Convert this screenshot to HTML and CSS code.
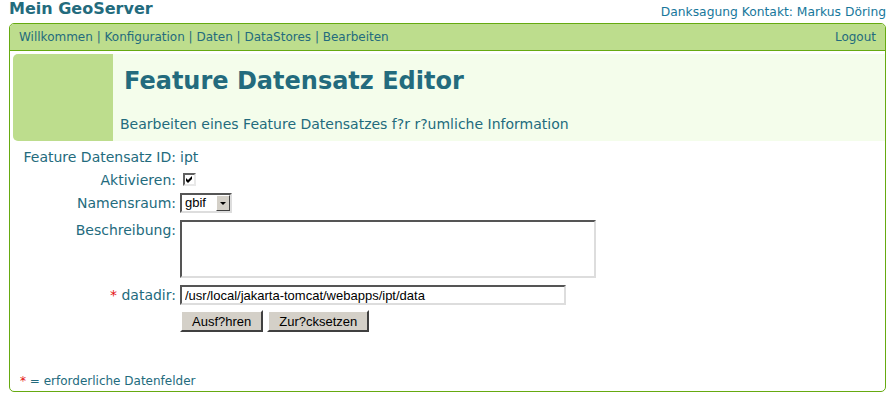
FILE: index.html
```html
<!DOCTYPE html>
<html>
<head>
    <meta charset="UTF-8">
    <title>Feature Datensatz Editor</title>
    <link rel="stylesheet" href="styles.css">
</head>
<body>
    <!-- Top line with title and credits -->
    <div class="top-line">
        <div class="site-title">Mein GeoServer</div>
        <div class="credits"><a href="#">Danksagung</a> <a href="#">Kontakt: Markus Döring</a></div>
    </div>
    <div class="frame">
        <div class="nav-bar">
            <div class="nav-links">
                <a href="#">Willkommen</a> | <a href="#">Konfiguration</a> | <a href="#">Daten</a> | <a href="#">DataStores</a> | <a href="#">Bearbeiten</a>
            </div>
            <a href="#" class="logout">Logout</a>
        </div>
        <div class="page-head">
            <div class="head-mark"></div>
            <div class="head-text">
                <h1>Feature Datensatz Editor</h1>
                <p>Bearbeiten eines Feature Datensatzes f?r r?umliche Information</p>
            </div>
        </div>
        <form class="edit-form">
            <div class="form-label">Feature Datensatz ID:</div>
            <div class="form-value">ipt</div>

            <div class="form-label">Aktivieren:</div>
            <div class="form-value">
                <span class="check">
                    <svg width="9" height="9" viewBox="0 0 9 9"><path d="M1 3 L3 5 L7 1 L7 4 L3 8 L1 6 Z" fill="#000"/></svg>
                </span>
            </div>

            <div class="form-label">Namensraum:</div>
            <div class="form-value">
                <div class="fake-select">
                    <span>gbif</span>
                    <span class="select-arrow"></span>
                </div>
            </div>

            <div class="form-label row-wide">Beschreibung:</div>
            <div class="form-value row-wide"><textarea class="text-area"></textarea></div>

            <div class="form-label row-wide"><span class="req">*</span> datadir:</div>
            <div class="form-value row-wide"><input type="text" class="text-field" value="/usr/local/jakarta-tomcat/webapps/ipt/data"></div>

            <div></div>
            <div class="form-value buttons">
                <button type="button" class="form-button">Ausf?hren</button>
                <button type="button" class="form-button">Zur?cksetzen</button>
            </div>
        </form>
        <div class="footnote"><span class="req">*</span> = erforderliche Datenfelder</div>
    </div>
</body>
</html>
```

FILE: styles.css
```css
body {
    margin: 0;
    padding: 0 3px 0 9px;
    font-family: "DejaVu Sans", Verdana, sans-serif;
    font-size: 12px;
    color: #236b7d;
    background-color: #fff;
}
a {
    color: inherit;
    text-decoration: none;
}
.top-line {
    display: flex;
    justify-content: space-between;
    align-items: flex-start;
    height: 23px;
}
.site-title {
    font-weight: bold;
    font-size: 16px;
    line-height: 20px;
    margin-top: -1px;
}
.credits {
    color: #17779b;
    font-size: 12.3px;
    line-height: 16px;
    margin-top: 4px;
}
.frame {
    border: 1px solid #66aa11;
    border-radius: 5px;
    box-sizing: border-box;
    height: 369px;
}
.nav-bar {
    display: flex;
    justify-content: space-between;
    align-items: center;
    height: 26px;
    padding: 0 9px;
    background-color: #bddd8d;
    border-bottom: 1px solid #66aa11;
    border-radius: 4px 4px 0 0;
    font-size: 12px;
}
.page-head {
    display: flex;
    margin: 3px 0 0 3px;
    height: 87px;
    background-color: #f4fdeb;
    border-radius: 5px 0 0 5px;
}
.head-mark {
    width: 100px;
    background-color: #bddd8d;
    border-radius: 5px 0 0 5px;
}
.head-text h1 {
    margin: 12px 0 0 11px;
    font-size: 24px;
    line-height: 30px;
}
.head-text p {
    margin: 19px 0 0 7px;
    font-size: 14px;
    line-height: 18px;
}
.edit-form {
    display: grid;
    grid-template-columns: 154px auto;
    column-gap: 4px;
    row-gap: 3px;
    margin: 6px 0 0 12px;
    align-items: start;
}
.form-label {
    text-align: right;
    font-size: 14px;
    line-height: 20px;
    white-space: nowrap;
}
.form-value {
    font-size: 14px;
    line-height: 20px;
}
.row-wide {
    margin-top: 4px;
}
.req {
    color: #e41010;
}
.check {
    display: inline-block;
    width: 13px;
    height: 13px;
    box-sizing: border-box;
    margin: 3px 0 0 3px;
    border: 2px solid;
    border-color: #606060 #e8e8e8 #e8e8e8 #606060;
    background-color: #fff;
    vertical-align: top;
}
.check svg {
    display: block;
}
.fake-select {
    display: flex;
    width: 52px;
    height: 20px;
    box-sizing: border-box;
    border: 2px solid;
    border-color: #555 #ddd #ddd #555;
    background-color: #fff;
    font-family: "Liberation Sans", Arial, sans-serif;
    font-size: 13px;
    line-height: 16px;
    color: #000;
}
.fake-select span:first-child {
    flex: 1;
    padding-left: 3px;
}
.select-arrow {
    width: 14px;
    background-color: #d4d0c8;
    border: 1px solid;
    border-color: #fff #404040 #404040 #fff;
    box-sizing: border-box;
    position: relative;
}
.select-arrow::after {
    content: "";
    position: absolute;
    left: 3px;
    top: 6px;
    border-left: 3px solid transparent;
    border-right: 3px solid transparent;
    border-top: 3px solid #000;
}
.text-area {
    display: block;
    width: 416px;
    height: 58px;
    box-sizing: border-box;
    margin: 0;
    border: 2px solid;
    border-color: #555 #ddd #ddd #555;
    resize: none;
}
.text-field {
    display: block;
    width: 386px;
    height: 20px;
    box-sizing: border-box;
    margin: 0;
    padding: 0 3px;
    border: 2px solid;
    border-color: #555 #ddd #ddd #555;
    font-family: "Liberation Sans", Arial, sans-serif;
    font-size: 13px;
    color: #000;
}
.buttons {
    display: flex;
    gap: 4px;
    margin-top: 2px;
}
.form-button {
    height: 22px;
    padding: 0 10px;
    border: 2px solid;
    border-color: #fff #404040 #404040 #fff;
    background-color: #d4d0c8;
    font-family: "Liberation Sans", Arial, sans-serif;
    font-size: 13px;
    color: #000;
}
.footnote {
    margin: 41px 0 0 10px;
    font-size: 12px;
    line-height: 16px;
}
```
